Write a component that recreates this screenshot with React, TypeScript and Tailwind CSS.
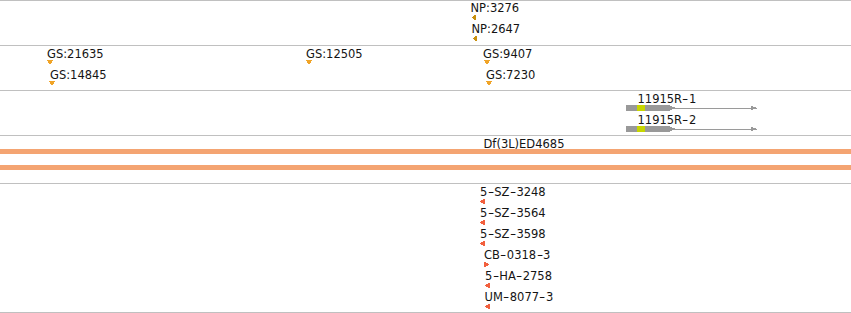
import React from "react";

type Kind = "left" | "smallLeft" | "right" | "down" | "gene";
type Feat = { text: string; x: number; dx: number; kind: Kind; color: string };

const GOLD = "#c8900e";
const AMBER = "#f0a428";
const RED = "#f2603e";

// pixel rows [y, x0, x1] for each marker shape
const SHAPES: Record<string, { w: number; h: number; rows: [number, number, number][] }> = {
  down: { w: 6, h: 4, rows: [[0, 0, 6], [1, 1, 5], [2, 1, 5], [3, 2, 4]] },
  left: { w: 5, h: 5, rows: [[0, 3, 5], [1, 1, 5], [2, 0, 5], [3, 1, 5], [4, 3, 5]] },
  smallLeft: { w: 4, h: 5, rows: [[0, 2, 4], [1, 1, 4], [2, 0, 4], [3, 1, 4], [4, 2, 4]] },
  right: { w: 5, h: 5, rows: [[0, 0, 2], [1, 0, 4], [2, 0, 5], [3, 0, 4], [4, 0, 2]] },
};

function LabelText({ text }: { text: string }) {
  const parts = text.split("-");
  return (
    <div className="whitespace-nowrap text-[11.5px] leading-[14px] text-[#141414] font-['DejaVu_Sans',sans-serif]">
      {parts.map((p, i) => (
        <React.Fragment key={i}>
          {i > 0 && <span className="inline-block mx-[1.4px] scale-x-150">-</span>}
          {p}
        </React.Fragment>
      ))}
    </div>
  );
}

function Marker({ kind, color }: { kind: Kind; color: string }) {
  if (kind === "gene") {
    return (
      <svg width="135" height="6" viewBox="0 0 135 6" className="block" shapeRendering="crispEdges">
        <rect x="44" y="2.5" width="87" height="1" fill="#9a9a9a" />
        <rect x="0" y="0" width="44" height="6" fill="#999999" />
        <rect x="11" y="0" width="8" height="6" fill="#c6d600" />
        <rect x="44" y="1" width="2" height="4" fill="#999999" />
        <rect x="46" y="2" width="3" height="2" fill="#999999" />
        <rect x="125" y="1" width="2" height="4" fill="#999999" />
        <rect x="127" y="2" width="3" height="2" fill="#999999" />
      </svg>
    );
  }
  const s = SHAPES[kind];
  return (
    <svg width={s.w} height={s.h} viewBox={`0 0 ${s.w} ${s.h}`} className="block" shapeRendering="crispEdges">
      {s.rows.map(([y, x0, x1]) => (
        <rect key={y} x={x0} y={y} width={x1 - x0} height="1" fill={color} />
      ))}
    </svg>
  );
}

function Feature({ f, markerClass }: { f: Feat; markerClass: string }) {
  return (
    <div className="absolute top-0 flex flex-col items-start" style={{ left: f.x }}>
      <LabelText text={f.text} />
      <div className={markerClass} style={{ marginLeft: f.dx }}>
        <Marker kind={f.kind} color={f.color} />
      </div>
    </div>
  );
}

function Lanes({ lanes, markerClass }: { lanes: Feat[][]; markerClass: string }) {
  return (
    <>
      {lanes.map((lane, i) => (
        <div key={i} className="relative h-[21px] shrink-0">
          {lane.map((f) => (
            <Feature key={f.text} f={f} markerClass={markerClass} />
          ))}
        </div>
      ))}
    </>
  );
}

const npLanes: Feat[][] = [
  [{ text: "NP:3276", x: 470.5, dx: 1, kind: "smallLeft", color: GOLD }],
  [{ text: "NP:2647", x: 471.5, dx: 1, kind: "smallLeft", color: GOLD }],
];

const gsLanes: Feat[][] = [
  [
    { text: "GS:21635", x: 47, dx: 0, kind: "down", color: AMBER },
    { text: "GS:12505", x: 306, dx: 0, kind: "down", color: AMBER },
    { text: "GS:9407", x: 483, dx: 1, kind: "down", color: AMBER },
  ],
  [
    { text: "GS:14845", x: 50, dx: -1, kind: "down", color: AMBER },
    { text: "GS:7230", x: 486, dx: 0, kind: "down", color: AMBER },
  ],
];

const geneLanes: Feat[][] = [
  [{ text: "11915R-1", x: 637.5, dx: -11.5, kind: "gene", color: "#999999" }],
  [{ text: "11915R-2", x: 637.5, dx: -11.5, kind: "gene", color: "#999999" }],
];

const insLanes: Feat[][] = [
  [{ text: "5-SZ-3248", x: 480, dx: 0, kind: "left", color: RED }],
  [{ text: "5-SZ-3564", x: 480, dx: 0, kind: "left", color: RED }],
  [{ text: "5-SZ-3598", x: 480, dx: 0, kind: "left", color: RED }],
  [{ text: "CB-0318-3", x: 484, dx: 0, kind: "right", color: RED }],
  [{ text: "5-HA-2758", x: 485, dx: 0, kind: "left", color: RED }],
  [{ text: "UM-8077-3", x: 484.5, dx: 0.5, kind: "left", color: RED }],
];

export default function App() {
  return (
    <div className="w-[851px] h-[313px] bg-white flex flex-col overflow-hidden">
      <div className="h-[45px] shrink-0 border-t border-[#c0c0c0] flex flex-col">
        <Lanes lanes={npLanes} markerClass="mt-0" />
      </div>
      <div className="h-[45px] shrink-0 border-t border-[#c0c0c0] pt-px flex flex-col">
        <Lanes lanes={gsLanes} markerClass="-mt-px" />
      </div>
      <div className="h-[45px] shrink-0 border-t border-[#c0c0c0] pt-px flex flex-col">
        <Lanes lanes={geneLanes} markerClass="-mt-px" />
      </div>
      <div className="h-[48px] shrink-0 border-t border-[#c0c0c0] pt-px flex flex-col">
        <div className="relative h-[12px] shrink-0">
          <div className="absolute top-0 left-[483.5px]">
            <LabelText text="Df(3L)ED4685" />
          </div>
        </div>
        <div className="h-[5px] w-full bg-[#f4a472]" />
        <div className="h-[5px] w-full bg-[#f4a472] mt-[11px]" />
      </div>
      <div className="h-[130px] shrink-0 border-t border-b border-[#c0c0c0] pt-px flex flex-col">
        <Lanes lanes={insLanes} markerClass="mt-0" />
      </div>
    </div>
  );
}
